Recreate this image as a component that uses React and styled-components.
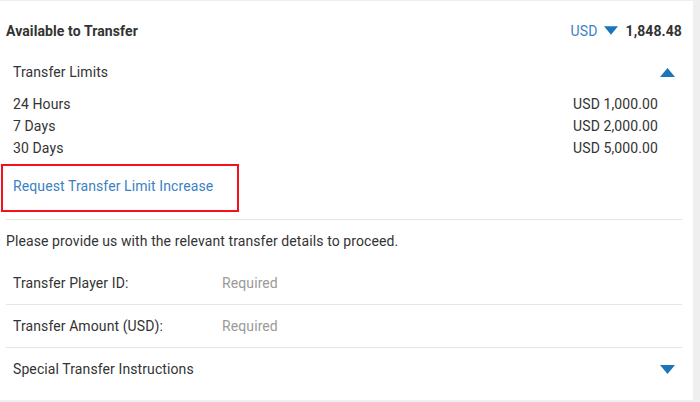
import styled, { createGlobalStyle } from "styled-components";

const GlobalStyle = createGlobalStyle`
  body {
    margin: 0;
    background: #efefef;
    font-family: Roboto, "Liberation Sans", sans-serif;
    font-size: 14px;
    letter-spacing: 0.1px;
    color: #333;
  }
`;

const Panel = styled.div`
  width: 693px;
  height: 399px;
  margin-top: 1px;
  box-sizing: border-box;
  background: #fff;
  padding: 0 11px 0 6px;
  display: flex;
  flex-direction: column;
`;

const Header = styled.div`
  height: 59px;
  display: flex;
  align-items: center;
  justify-content: space-between;
`;

const Title = styled.div`
  font-weight: 700;
`;

const Balance = styled.div`
  display: flex;
  align-items: center;
  gap: 6px;
`;

const Currency = styled.span`
  color: #3b82c4;
`;

const Amount = styled.span`
  font-weight: 700;
  margin-left: 2px;
`;

const Section = styled.div`
  display: flex;
  align-items: center;
  justify-content: space-between;
  height: ${(p) => p.$h || 24}px;
  padding: 0 7px;
`;

const LimitList = styled.div`
  margin-top: 9px;
  padding: 0 24px 0 7px;
`;

const LimitRow = styled.div`
  display: flex;
  justify-content: space-between;
  height: 22px;
  line-height: 22px;
`;

const Highlight = styled.div`
  margin: 5px 0 0 -5px;
  width: 238px;
  height: 48px;
  box-sizing: border-box;
  border: 2px solid #f5111b;
  display: flex;
  align-items: center;
  padding: 0 0 4px 10px;
`;

const Link = styled.a`
  color: #3b82c4;
  text-decoration: none;
  cursor: pointer;
`;

const Divider = styled.div`
  height: 1px;
  background: #e6e6e6;
  margin-top: ${(p) => p.$mt || 0}px;
`;

const Info = styled.div`
  height: 42px;
  display: flex;
  align-items: center;
`;

const Field = styled.div`
  height: 42px;
  display: flex;
  align-items: center;
  padding: 0 7px;
`;

const Label = styled.div`
  width: 209px;
`;

const Placeholder = styled.div`
  color: #9a9a9a;
`;

const Triangle = ({ up, w = 15, h = 9 }) => (
  <svg width={w} height={h} viewBox="0 0 15 9">
    <polygon
      points={up ? "0,9 15,9 7.5,0" : "0,0 15,0 7.5,9"}
      fill="#1b75bb"
    />
  </svg>
);

const limits = [
  ["24 Hours", "USD 1,000.00"],
  ["7 Days", "USD 2,000.00"],
  ["30 Days", "USD 5,000.00"],
];

export default function App() {
  return (
    <>
      <GlobalStyle />
      <Panel>
        <Header>
          <Title>Available to Transfer</Title>
          <Balance>
            <Currency>USD</Currency>
            <Triangle w={14} h={9} />
            <Amount>1,848.48</Amount>
          </Balance>
        </Header>
        <Section>
          <span>Transfer Limits</span>
          <Triangle up />
        </Section>
        <LimitList>
          {limits.map(([k, v]) => (
            <LimitRow key={k}>
              <span>{k}</span>
              <span>{v}</span>
            </LimitRow>
          ))}
        </LimitList>
        <Highlight>
          <Link>Request Transfer Limit Increase</Link>
        </Highlight>
        <Divider $mt={7} />
        <Info>Please provide us with the relevant transfer details to proceed.</Info>
        <Field>
          <Label>Transfer Player ID:</Label>
          <Placeholder>Required</Placeholder>
        </Field>
        <Divider />
        <Field>
          <Label>Transfer Amount (USD):</Label>
          <Placeholder>Required</Placeholder>
        </Field>
        <Divider />
        <Section $h={42}>
          <span>Special Transfer Instructions</span>
          <Triangle />
        </Section>
      </Panel>
    </>
  );
}
